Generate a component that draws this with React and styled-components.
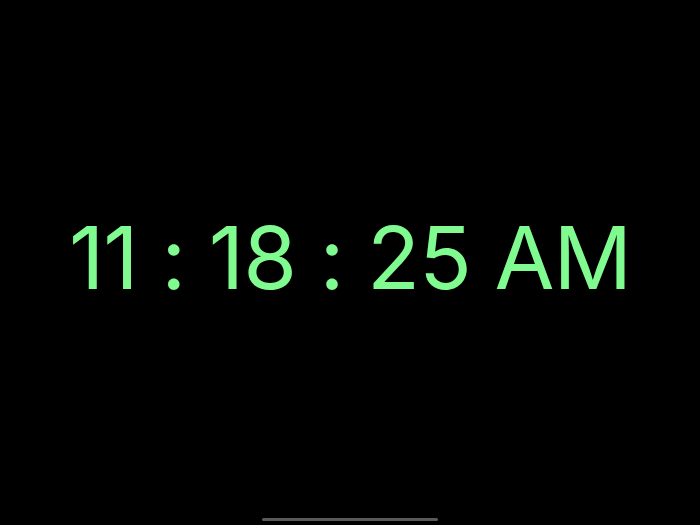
import React from "react";
import styled, { createGlobalStyle } from "styled-components";

const Global = createGlobalStyle`
  html, body { margin: 0; padding: 0; background: #000; }
  #root { height: 525px; }
`;

const Screen = styled.div`
  height: 525px;
  width: 700px;
  background: #000;
  display: flex;
  flex-direction: column;
  align-items: center;
`;

const Stage = styled.div`
  flex: 1;
  display: flex;
  align-items: center;
  justify-content: center;
  padding-bottom: 4px;
`;

const Clock = styled.div`
  font-family: Inter, "Liberation Sans", sans-serif;
  font-size: 87px;
  font-weight: 400;
  color: #80fb90;
  letter-spacing: -1px;
  white-space: nowrap;
`;

const HomeIndicator = styled.div`
  width: 176px;
  height: 3px;
  border-radius: 2px;
  background: #5a5a5a;
  margin-bottom: 4px;
`;

export default function App() {
  return (
    <Screen>
      <Global />
      <Stage>
        <Clock>11 : 18 : 25 AM</Clock>
      </Stage>
      <HomeIndicator />
    </Screen>
  );
}
